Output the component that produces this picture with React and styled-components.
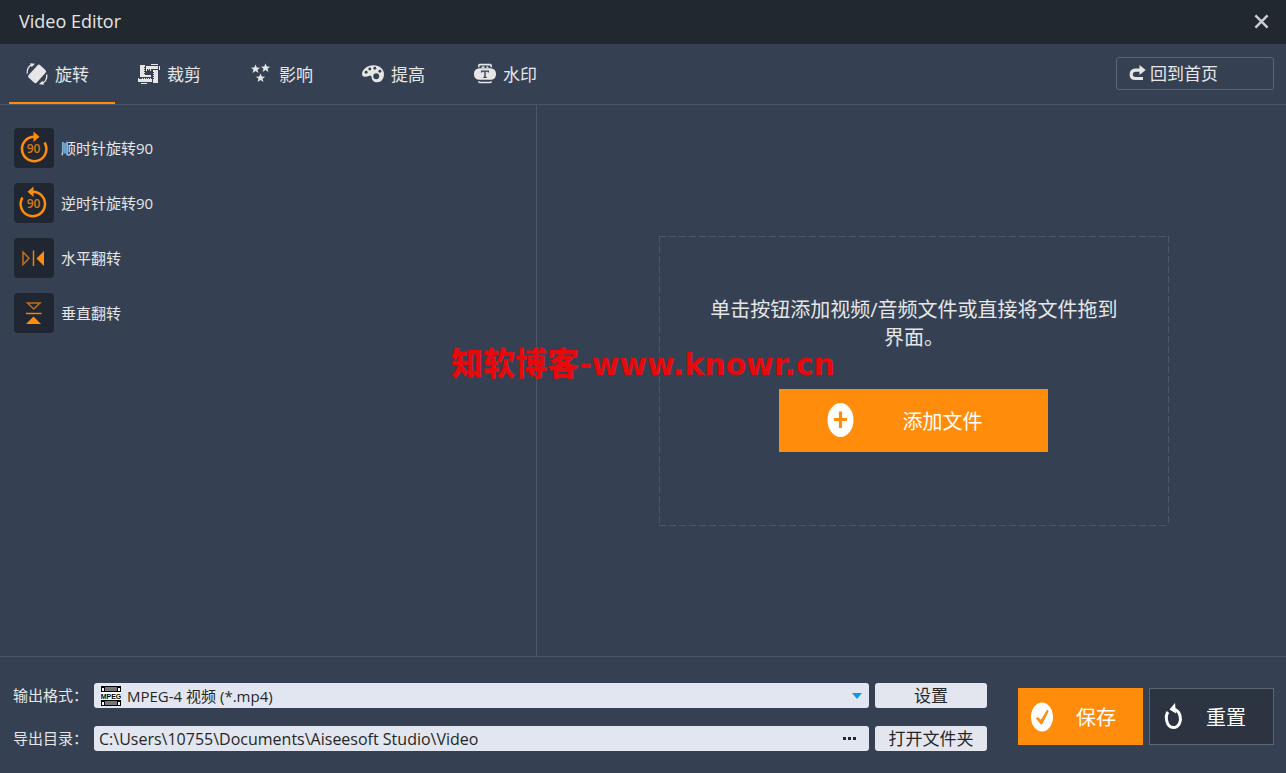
import React, { useState } from 'react';
import styled, { createGlobalStyle, css } from 'styled-components';

const GlobalStyle = createGlobalStyle`
  *, *::before, *::after {
    box-sizing: border-box;
  }

  body {
    margin: 0;
    background: #354153;
  }

  body, button, input, select {
    font-family: "Open Sans", "Noto Sans CJK SC", sans-serif;
    font-weight: 400;
  }
`;

const Window = styled.div`
  position: relative;
  display: flex;
  flex-direction: column;
  min-height: 100vh;
  color: #e6e6e6;
  background: #354153;
`;

const TitleBar = styled.header`
  display: flex;
  align-items: center;
  justify-content: space-between;
  height: 44px;
  padding: 0 17px 2px 19px;
  background: #222830;
`;

const Title = styled.h1`
  margin: 0;
  font-size: 18px;
  font-weight: 400;
  line-height: 24px;
`;

const CloseButton = styled.button`
  display: flex;
  padding: 0;
  border: 0;
  background: none;
  cursor: pointer;
`;

const Toolbar = styled.nav`
  display: flex;
  align-items: center;
  justify-content: space-between;
  height: 61px;
  padding: 0 12px 0 9px;
  border-bottom: 1px solid #4a5565;
`;

const TabList = styled.div`
  display: flex;
  align-self: stretch;
  gap: 6px;
`;

const Tab = styled.button`
  display: flex;
  align-items: center;
  gap: 7px;
  min-width: 106px;
  padding: 2px 16px 0 17px;
  border: 0;
  border-bottom: 2px solid ${(props) => (props.$active ? '#ff8c0a' : 'transparent')};
  color: #e6e6e6;
  background: none;
  font-size: 17px;
  cursor: pointer;
`;

const HomeButton = styled.button`
  display: flex;
  align-items: center;
  gap: 4px;
  width: 158px;
  height: 33px;
  margin-bottom: 1px;
  padding: 0 12px 2px;
  border: 1px solid #5b6675;
  border-radius: 3px;
  color: #e6e6e6;
  background: none;
  font-size: 17px;
  cursor: pointer;
`;

const Content = styled.main`
  flex: 1;
  display: grid;
  grid-template-columns: 43fr 60fr;
`;

const ToolPanel = styled.section`
  display: flex;
  flex-direction: column;
  gap: 15px;
  padding: 23px 14px;
  border-right: 1px solid #4a5565;
`;

const ToolButton = styled.button`
  display: flex;
  align-items: center;
  align-self: flex-start;
  gap: 7px;
  padding: 0;
  border: 0;
  color: #e6e6e6;
  background: none;
  font-size: 15px;
  cursor: pointer;
`;

const ToolIcon = styled.span`
  display: flex;
  width: 40px;
  height: 40px;
  border-radius: 4px;
  background: #212732;
`;

const ButtonLabel = styled.span`
  padding-bottom: 2px;
`;

const PreviewPanel = styled.section`
  display: flex;
  align-items: center;
  justify-content: center;
  padding-left: 5px;
`;

const dashX = 'repeating-linear-gradient(90deg, #4c5767 0 7px, transparent 7px 10px)';
const dashY = 'repeating-linear-gradient(180deg, #4c5767 0 7px, transparent 7px 10px)';

const DropZone = styled.div`
  display: flex;
  flex-direction: column;
  align-items: center;
  gap: 37px;
  width: 68.5%;
  min-height: 290px;
  padding: 60px 48px 74px;
  background-image: ${dashX}, ${dashX}, ${dashY}, ${dashY};
  background-position: top, bottom, left, right;
  background-size: 100% 1px, 100% 1px, 1px 100%, 1px 100%;
  background-repeat: no-repeat;
`;

const Hint = styled.p`
  margin: 0;
  font-size: 20px;
  line-height: 28px;
  text-align: center;
`;

const solid = css`
  border: 0;
  background: #ff8c0a;
`;

const outlined = css`
  border: 1px solid #5b6675;
  background: #2c3442;
`;

const ActionButton = styled.button`
  display: flex;
  align-items: center;
  color: #ffffff;
  font-size: 20px;
  cursor: pointer;
  ${(props) => (props.$outlined ? outlined : solid)}
`;

const AddButton = styled(ActionButton)`
  gap: 48px;
  width: 269px;
  height: 63px;
  padding: 0 48px;
`;

const FooterButton = styled(ActionButton)`
  justify-content: space-between;
  width: 125px;
  height: 57px;
  padding: 0 27px 0 12px;
`;

const Footer = styled.footer`
  display: flex;
  align-items: center;
  gap: 31px;
  padding: 26px 12px 22px 13px;
  border-top: 1px solid #4a5565;
`;

const OutputForm = styled.div`
  flex: 1;
  display: grid;
  grid-template-columns: auto 1fr 112px;
  align-items: center;
  gap: 18px 6px;
`;

const Label = styled.label`
  font-size: 15px;
  line-height: 25px;
`;

const Field = styled.div`
  display: flex;
  align-items: center;
  position: relative;
  height: 25px;
  border-radius: 3px;
  color: #262626;
  background: #e2e6f0;
`;

const fieldControl = css`
  flex: 1;
  min-width: 0;
  height: 25px;
  border: 0;
  border-radius: 3px;
  color: inherit;
  background: none;
`;

const FormatSelect = styled.select`
  ${fieldControl}
  padding: 0 24px 0 33px;
  font-size: 15px;
  appearance: none;
`;

const PathInput = styled.input`
  ${fieldControl}
  padding: 0 5px;
  font-size: 16px;
`;

const FormatBadge = styled.span`
  position: absolute;
  left: 7px;
  display: flex;
  pointer-events: none;
`;

const SelectArrow = styled.span`
  position: absolute;
  right: 7px;
  display: flex;
  pointer-events: none;
`;

const BrowseButton = styled.button`
  display: flex;
  padding: 8px 12px;
  border: 0;
  background: none;
  cursor: pointer;
`;

const SmallButton = styled.button`
  height: 25px;
  padding: 0;
  border: 0;
  border-radius: 3px;
  color: #262626;
  background: #e3e6ee;
  font-size: 17px;
  line-height: 25px;
  cursor: pointer;
`;

const Actions = styled.div`
  display: flex;
  gap: 6px;
  padding-bottom: 1px;
`;

const Watermark = styled.div`
  position: absolute;
  top: 47%;
  left: 50%;
  transform: translate(-50%, -50%);
  color: #e60a0d;
  font-family: "DejaVu Sans", "Noto Sans CJK SC", sans-serif;
  font-size: 30px;
  font-weight: 700;
  line-height: 36px;
  white-space: nowrap;
  pointer-events: none;
`;

const WatermarkName = styled.span`
  font-family: "Noto Sans CJK SC", sans-serif;
  font-size: 32px;
  font-weight: 900;
`;

function CloseIcon() {
  return (
    <svg width='15' height='15' viewBox='0 0 16 16' stroke='#cdd0d3' strokeWidth='2.6'>
      <path d='M1.5 1.5 14.5 14.5M14.5 1.5 1.5 14.5' />
    </svg>
  );
}

function RotateIcon() {
  return (
    <svg width='22' height='22' viewBox='0 0 22 22' fill='#e6e6e6'>
      <rect x='2.6' y='5.4' width='17' height='11' rx='2' transform='rotate(-48 11.1 10.9)' />
      <path d='M1.2 10.5C1 6.3 2.6 3.2 5.5 1.8' fill='none' stroke='#e6e6e6' strokeWidth='1.3' />
      <path d='M4 .3 9 .8 5.6 4.3z' />
      <path d='M20.8 11.5C21 15.7 19.4 18.8 16.5 20.2' fill='none' stroke='#e6e6e6' strokeWidth='1.3' />
      <path d='M18 21.7 13 21.2 16.4 17.7z' />
    </svg>
  );
}

function CropIcon() {
  return (
    <svg width='22' height='22' viewBox='0 0 22 22' fill='#e6e6e6' shapeRendering='crispEdges'>
      <path d='M2 2h5v12H2zM8 3h12v3H8zM15 7h5v13h-5zM1 16h13v3H1z' />
      <path d='M7 12h6v2H7zM13 1h7v1h-7zM21 3h1v4h-1zM0 15h1v4H0zM3 20h6v1H3zM8 6h1v2H8zM10 6h1v1h-1zM12 6h1v2h-1zM4 15h1v1H4zM6 15h1v1H6zM8 15h1v1H8zM10 15h1v1h-1zM12 15h1v1h-1z' />
      <path d='M6 4h1v1H6zM6 6h1v1H6zM6 8h1v1H6zM6 10h1v1H6zM15 9h1v1h-1zM15 11h1v1h-1zM15 13h1v1h-1zM15 15h1v1h-1z' fill='#354153' />
    </svg>
  );
}

function StarsIcon() {
  const star = 'M0-4.6 1.3-1.4 4.6-1.3 2 .7 3 4 0 2.1-3 4-2 .7-4.6-1.3-1.3-1.4z';
  return (
    <svg width='22' height='22' viewBox='0 0 22 22' fill='#e6e6e6'>
      <path d={star} transform='translate(5.5 6)' />
      <path d={star} transform='translate(15.5 5)' />
      <path d={star} transform='translate(10.5 15)' />
    </svg>
  );
}

function PaletteIcon() {
  return (
    <svg width='22' height='22' viewBox='0 0 24 22'>
      <path d='M0 11C.4 6 5.5 1.5 12.5 1.5 19.5 1.5 24 6 24 11 24 16.5 21 20 16.5 20 13 20 10.5 17.5 10.5 14.5 10.5 13 9.5 12.5 8 13 5 14.2 0 15 0 11z' fill='#e6e6e6' />
      <g fill='#354153'>
        <circle cx='4.5' cy='9' r='1.6' />
        <circle cx='8.5' cy='5.5' r='1.6' />
        <circle cx='14' cy='4.7' r='1.6' />
        <circle cx='19.5' cy='8' r='1.6' />
        <circle cx='15.5' cy='13.5' r='3.2' />
      </g>
    </svg>
  );
}

function StampIcon() {
  return (
    <svg width='22' height='22' viewBox='0 0 23 22'>
      <rect y='5' width='23' height='12' rx='5.5' fill='#e6e6e6' />
      <path d='M5 4V2.5Q5 1.2 6 1.2H17Q18 1.2 18 2.5V4M8 4H11M13 4H15M5 18.5Q5 20 6.5 20H16.5Q18 20 18 18.5' fill='none' stroke='#e6e6e6' strokeWidth='1.6' />
      <path d='M8 9.5V8H15V9.5M11.5 8V14.5M9.8 14.5H13.2' fill='none' stroke='#354153' strokeWidth='1.4' />
    </svg>
  );
}

function BackIcon() {
  return (
    <svg width='17' height='18' viewBox='0 0 17 18'>
      <path d='M14 14.5H6.5Q2.2 14.5 2.2 10.5T6.5 6.2H11' fill='none' stroke='#e6e6e6' strokeWidth='3.2' />
      <path d='M10.5 1 16.7 6 10.5 11z' fill='#e6e6e6' />
    </svg>
  );
}

function Rotate90Icon({ flip = false }) {
  return (
    <svg width='40' height='40' viewBox='0 0 40 40'>
      <g transform={flip ? 'translate(39 0) scale(-1 1)' : undefined}>
        <path d='M30.5 14.5A12.2 12.2 0 1 1 20.5 8.8' fill='none' stroke='#ff8c0a' strokeWidth='2.5' />
        <path d='M19.5 3.5 25.5 8.8 19.5 14z' fill='#ff8c0a' />
      </g>
      <text x='19.5' y='25' textAnchor='middle' fontSize='12' fontWeight='600' fill='#d67a12'>90</text>
    </svg>
  );
}

function FlipIcon({ vertical = false }) {
  return (
    <svg width='40' height='40' viewBox='0 0 40 40'>
      <g transform={vertical ? 'translate(40 1) rotate(90)' : undefined}>
        <path d='M9 14V26.5L15 20.2z' fill='none' stroke='#c07018' strokeWidth='1.5' />
        <path d='M19.5 12.5V28' stroke='#e88410' strokeWidth='1.5' />
        <path d='M30 13V28L22.5 20.5z' fill='#ff8c0a' />
      </g>
    </svg>
  );
}

function PlusIcon() {
  return (
    <svg width='27' height='34' viewBox='0 0 27 34'>
      <ellipse cx='13.5' cy='17' rx='13' ry='17' fill='#fff' />
      <path d='M13.5 8.5V25M7 16.5H20' stroke='#ff8c0a' strokeWidth='3.2' />
    </svg>
  );
}

function CheckIcon() {
  return (
    <svg width='24' height='30' viewBox='0 0 24 30'>
      <ellipse cx='12' cy='15' rx='11' ry='14.5' fill='#fff' />
      <path d='M6.5 16.5 8 15.5 11 18.5 17.5 8 18 9.5 11.5 22.5z' fill='#ff8c0a' stroke='#ff8c0a' />
    </svg>
  );
}

function ResetIcon() {
  return (
    <svg width='24' height='28' viewBox='0 0 24 28'>
      <path d='M6 9C3 13 4 24.5 11.5 24.5 17 24.5 19.5 18 18 12.5 17 9 15 7 12 6.5' fill='none' stroke='#fff' strokeWidth='3' />
      <path d='M13 0 14 10.5 7.5 6.5z' fill='#fff' />
    </svg>
  );
}

function MpegIcon() {
  return (
    <svg width='20' height='20' viewBox='0 0 20 20' shapeRendering='crispEdges'>
      <path d='M0 0h20v20H0z' fill='#fff' />
      <path d='M0 0h20v6H0zM0 14h20v6H0z' fill='#000' />
      <path d='M4 1h12v4H4zM4 15h12v4H4z' fill='#777' />
      <path d='M1 2h2v3H1zM17 2h2v3h-2zM1 16h2v3H1zM17 16h2v3h-2z' fill='#fff' />
      <text x='10' y='13' textAnchor='middle' fontFamily='Liberation Sans Narrow, Liberation Sans' fontSize='7' fontWeight='700'>MPEG</text>
    </svg>
  );
}

const TABS = [
  { id: 'rotate', label: '旋转', Icon: RotateIcon },
  { id: 'crop', label: '裁剪', Icon: CropIcon },
  { id: 'effect', label: '影响', Icon: StarsIcon },
  { id: 'enhance', label: '提高', Icon: PaletteIcon },
  { id: 'watermark', label: '水印', Icon: StampIcon },
];

const TOOLS = [
  { id: 'cw', label: '顺时针旋转90', icon: <Rotate90Icon /> },
  { id: 'ccw', label: '逆时针旋转90', icon: <Rotate90Icon flip /> },
  { id: 'horizontal', label: '水平翻转', icon: <FlipIcon /> },
  { id: 'vertical', label: '垂直翻转', icon: <FlipIcon vertical /> },
];

function App() {
  const [tab, setTab] = useState('rotate');
  const [path, setPath] = useState('C:\\Users\\10755\\Documents\\Aiseesoft Studio\\Video');

  return (
    <Window>
      <GlobalStyle />
      <TitleBar>
        <Title>Video Editor</Title>
        <CloseButton type='button' aria-label='关闭'><CloseIcon /></CloseButton>
      </TitleBar>
      <Toolbar>
        <TabList>
          {TABS.map(({ id, label, Icon }) => (
            <Tab key={id} type='button' $active={tab === id} onClick={() => setTab(id)}>
              <Icon />
              <ButtonLabel>{label}</ButtonLabel>
            </Tab>
          ))}
        </TabList>
        <HomeButton type='button'>
          <BackIcon />
          回到首页
        </HomeButton>
      </Toolbar>
      <Content>
        <ToolPanel>
          {TOOLS.map((tool) => (
            <ToolButton key={tool.id} type='button'>
              <ToolIcon>{tool.icon}</ToolIcon>
              <ButtonLabel>{tool.label}</ButtonLabel>
            </ToolButton>
          ))}
        </ToolPanel>
        <PreviewPanel>
          <DropZone>
            <Hint>单击按钮添加视频/音频文件或直接将文件拖到界面。</Hint>
            <AddButton type='button'>
              <PlusIcon />
              添加文件
            </AddButton>
          </DropZone>
        </PreviewPanel>
      </Content>
      <Footer>
        <OutputForm>
          <Label htmlFor='format'>输出格式：</Label>
          <Field>
            <FormatSelect id='format'>
              <option>MPEG-4 视频 (*.mp4)</option>
            </FormatSelect>
            <FormatBadge><MpegIcon /></FormatBadge>
            <SelectArrow>
              <svg width='10' height='6' viewBox='0 0 10 6'><path d='M0 0H10L5 6z' fill='#0a9be0' /></svg>
            </SelectArrow>
          </Field>
          <SmallButton type='button'>设置</SmallButton>
          <Label htmlFor='folder'>导出目录：</Label>
          <Field>
            <PathInput id='folder' value={path} onChange={(e) => setPath(e.target.value)} />
            <BrowseButton type='button' aria-label='浏览'>
              <svg width='14' height='3' viewBox='0 0 14 3'><path d='M0 0h3v3H0zM5 0h3v3H5zM10 0h3v3h-3z' fill='#262626' /></svg>
            </BrowseButton>
          </Field>
          <SmallButton type='button'>打开文件夹</SmallButton>
        </OutputForm>
        <Actions>
          <FooterButton type='button'>
            <CheckIcon />
            保存
          </FooterButton>
          <FooterButton type='button' $outlined>
            <ResetIcon />
            重置
          </FooterButton>
        </Actions>
      </Footer>
      <Watermark>
        <WatermarkName>知软博客</WatermarkName>
        -www.knowr.cn
      </Watermark>
    </Window>
  );
}

export default App;
